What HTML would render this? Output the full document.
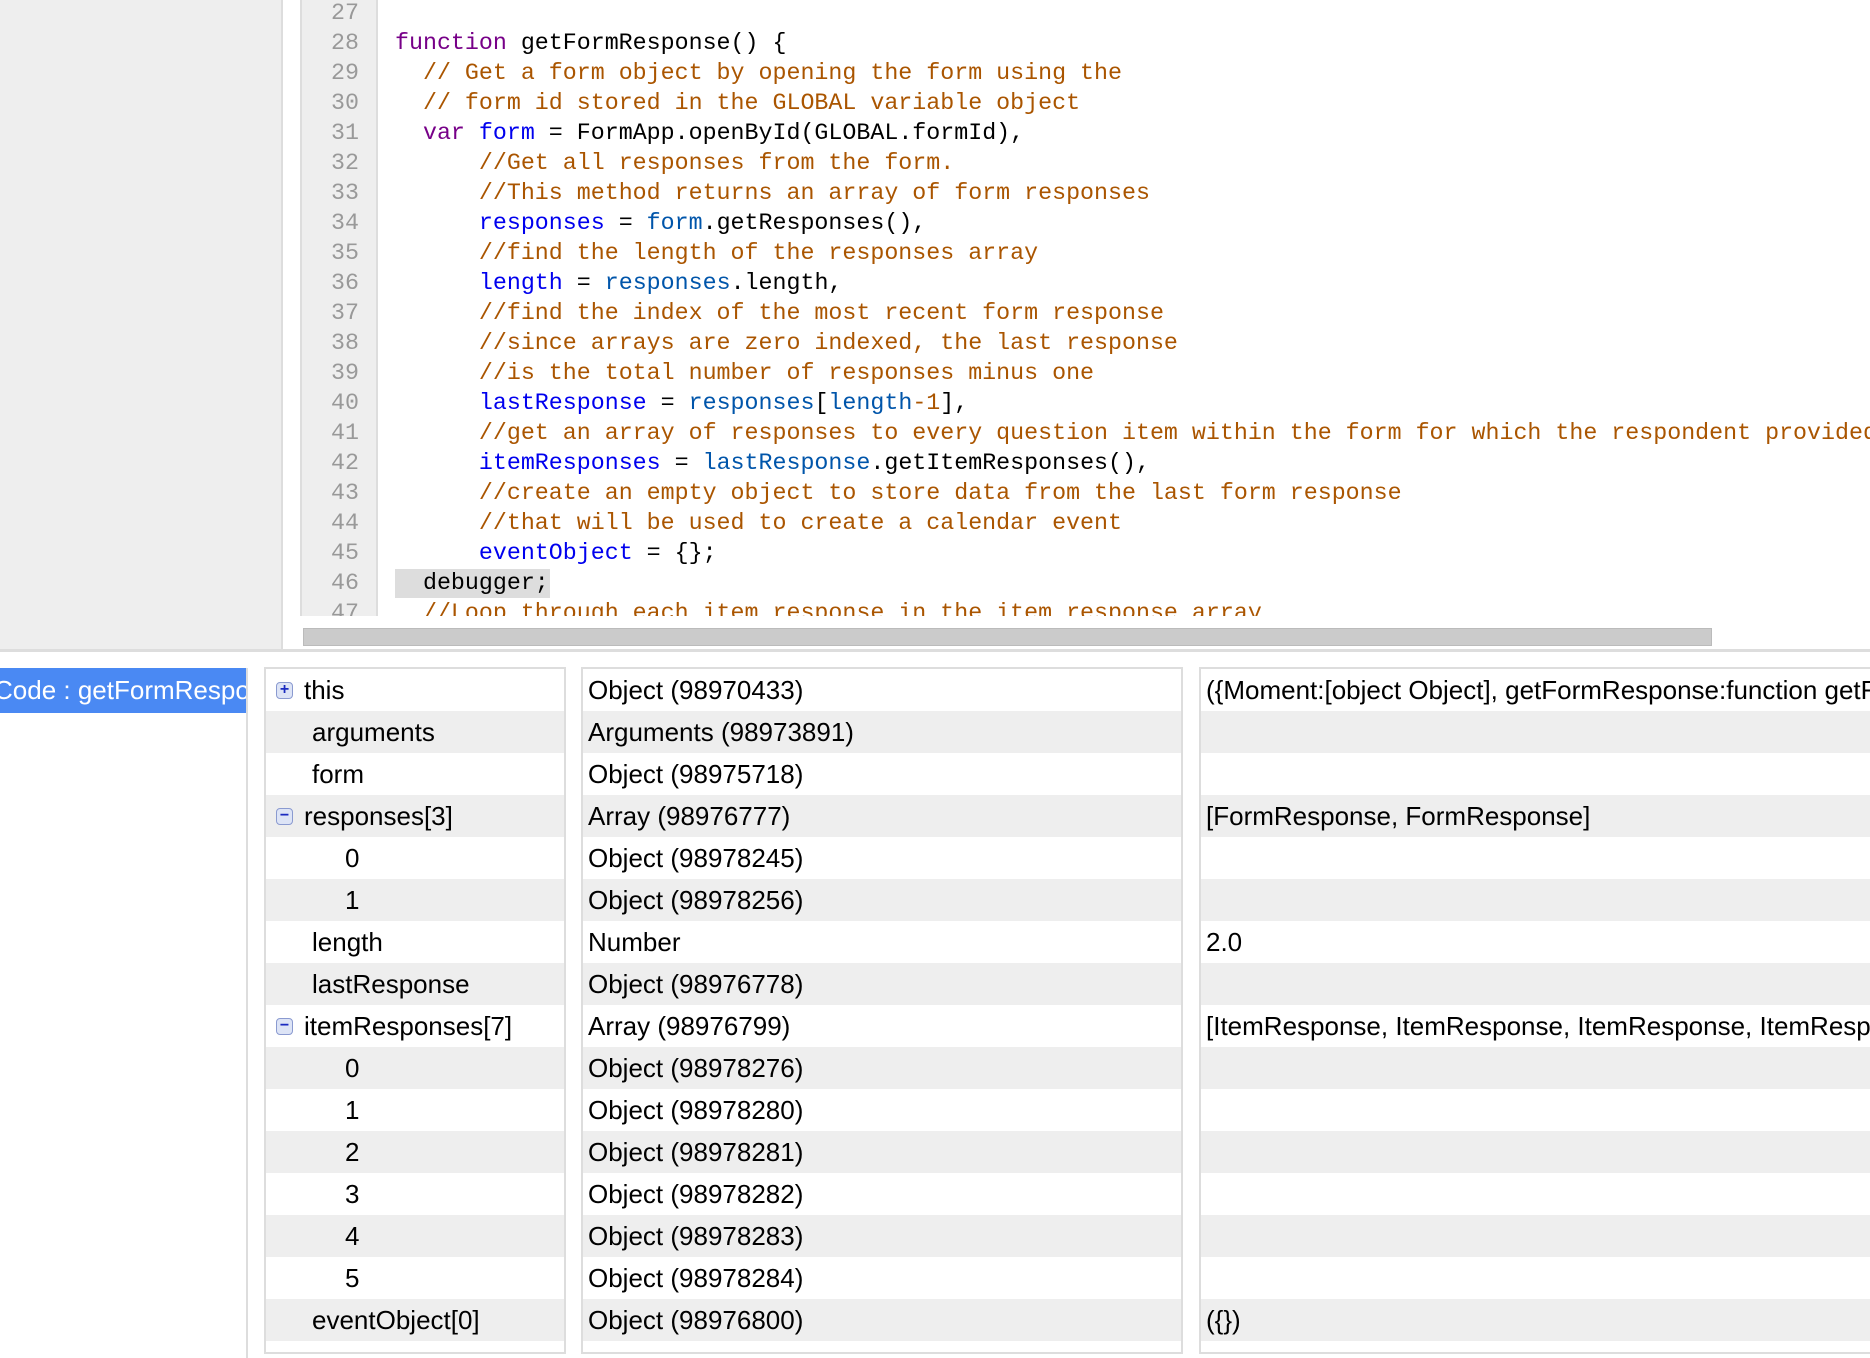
<!DOCTYPE html>
<html><head><meta charset="utf-8"><style>
*{margin:0;padding:0;box-sizing:border-box}
body{width:1870px;height:1358px;overflow:hidden;background:#fff;position:relative;font-family:"Liberation Sans",Arial,sans-serif}
.lp{position:absolute;left:0;top:0;width:283px;height:649px;background:#eee;border-right:2px solid #ddd}
.strip{position:absolute;left:285px;top:0;width:15px;height:649px;background:#fff}
.gut{position:absolute;left:300px;top:0;width:78px;height:616px;background:#eee;border-left:2px solid #ddd;border-right:2px solid #ddd}
.code{position:absolute;left:0;top:0;width:1870px;height:616px;overflow:hidden}
.ln{position:absolute;left:300px;width:59px;text-align:right;color:#999;font-family:"Liberation Mono",monospace;font-size:23.3px;line-height:30px}
.cl{position:absolute;left:395px;white-space:pre;font-family:"Liberation Mono",monospace;font-size:23.3px;line-height:30px;color:#000}
.k{color:#770088}.c{color:#aa5500}.d{color:#0000ee}.v{color:#0055aa}
.sb{position:absolute;left:303px;top:628px;width:1409px;height:18px;background:#cbcbcb;border:1px solid #bbb}
.hl{position:absolute;left:0;top:649px;width:1870px;height:3px;background:#ddd}
.tab{position:absolute;left:0;top:668px;width:246px;height:45px;background:#4a89f3;color:#fff;font-size:26px;line-height:45px;white-space:nowrap;overflow:hidden}
.vl{position:absolute;left:246px;top:668px;width:2px;height:690px;background:#ddd}
.t{position:absolute;top:667px;height:687px;border:2px solid #ddd;overflow:hidden}
.r{position:absolute;left:0;right:0;height:42px;font-size:26px;line-height:42px;white-space:nowrap;color:#000}
.g{background:#eee}
.ic{position:absolute;left:10px;top:13px;width:17px;height:17px;border:1px solid #8a9ad0;border-radius:4px;background:#dde4f6;color:#1a2ac0;font-size:16px;line-height:14px;text-align:center;font-weight:bold}
</style></head><body>
<div class="lp"></div><div class="strip"></div>
<div class="gut"></div>
<div class="code">
<div class="ln" style="top:-2px">27</div><div class="ln" style="top:28px">28</div><div class="ln" style="top:58px">29</div><div class="ln" style="top:88px">30</div><div class="ln" style="top:118px">31</div><div class="ln" style="top:148px">32</div><div class="ln" style="top:178px">33</div><div class="ln" style="top:208px">34</div><div class="ln" style="top:238px">35</div><div class="ln" style="top:268px">36</div><div class="ln" style="top:298px">37</div><div class="ln" style="top:328px">38</div><div class="ln" style="top:358px">39</div><div class="ln" style="top:388px">40</div><div class="ln" style="top:418px">41</div><div class="ln" style="top:448px">42</div><div class="ln" style="top:478px">43</div><div class="ln" style="top:508px">44</div><div class="ln" style="top:538px">45</div><div class="ln" style="top:568px">46</div><div class="ln" style="top:598px">47</div>
<div style="position:absolute;left:395px;top:569px;width:155px;height:29px;background:#ddd"></div>
<div class="cl" style="top:28px"><span class="k">function</span> getFormResponse() {</div>
<div class="cl" style="top:58px">  <span class="c">// Get a form object by opening the form using the</span></div>
<div class="cl" style="top:88px">  <span class="c">// form id stored in the GLOBAL variable object</span></div>
<div class="cl" style="top:118px">  <span class="k">var</span> <span class="d">form</span> = FormApp.openById(GLOBAL.formId),</div>
<div class="cl" style="top:148px">      <span class="c">//Get all responses from the form.</span></div>
<div class="cl" style="top:178px">      <span class="c">//This method returns an array of form responses</span></div>
<div class="cl" style="top:208px">      <span class="d">responses</span> = <span class="v">form</span>.getResponses(),</div>
<div class="cl" style="top:238px">      <span class="c">//find the length of the responses array</span></div>
<div class="cl" style="top:268px">      <span class="d">length</span> = <span class="v">responses</span>.length,</div>
<div class="cl" style="top:298px">      <span class="c">//find the index of the most recent form response</span></div>
<div class="cl" style="top:328px">      <span class="c">//since arrays are zero indexed, the last response</span></div>
<div class="cl" style="top:358px">      <span class="c">//is the total number of responses minus one</span></div>
<div class="cl" style="top:388px">      <span class="d">lastResponse</span> = <span class="v">responses</span>[<span class="v">length</span><span class="c">-1</span>],</div>
<div class="cl" style="top:418px">      <span class="c">//get an array of responses to every question item within the form for which the respondent provided</span></div>
<div class="cl" style="top:448px">      <span class="d">itemResponses</span> = <span class="v">lastResponse</span>.getItemResponses(),</div>
<div class="cl" style="top:478px">      <span class="c">//create an empty object to store data from the last form response</span></div>
<div class="cl" style="top:508px">      <span class="c">//that will be used to create a calendar event</span></div>
<div class="cl" style="top:538px">      <span class="d">eventObject</span> = {};</div>
<div class="cl" style="top:568px">  debugger;</div>
<div class="cl" style="top:598px">  <span class="c">//Loop through each item response in the item response array</span></div>
</div>
<div class="sb"></div>
<div class="hl"></div>
<div class="tab"><span style="margin-left:-6px">Code : getFormResponse</span></div>
<div class="vl"></div>

<div class="t" style="left:264px;width:302px">
<div class="r" style="top:0"><div class="ic">+</div><span style="margin-left:38px">this</span></div>
<div class="r g" style="top:42px"><span style="margin-left:46px">arguments</span></div>
<div class="r" style="top:84px"><span style="margin-left:46px">form</span></div>
<div class="r g" style="top:126px"><div class="ic">−</div><span style="margin-left:38px">responses[3]</span></div>
<div class="r" style="top:168px"><span style="margin-left:79px">0</span></div>
<div class="r g" style="top:210px"><span style="margin-left:79px">1</span></div>
<div class="r" style="top:252px"><span style="margin-left:46px">length</span></div>
<div class="r g" style="top:294px"><span style="margin-left:46px">lastResponse</span></div>
<div class="r" style="top:336px"><div class="ic">−</div><span style="margin-left:38px">itemResponses[7]</span></div>
<div class="r g" style="top:378px"><span style="margin-left:79px">0</span></div>
<div class="r" style="top:420px"><span style="margin-left:79px">1</span></div>
<div class="r g" style="top:462px"><span style="margin-left:79px">2</span></div>
<div class="r" style="top:504px"><span style="margin-left:79px">3</span></div>
<div class="r g" style="top:546px"><span style="margin-left:79px">4</span></div>
<div class="r" style="top:588px"><span style="margin-left:79px">5</span></div>
<div class="r g" style="top:630px"><span style="margin-left:46px">eventObject[0]</span></div>
<div class="r" style="top:672px"><span style="margin-left:46px">i</span></div>
</div>

<div class="t" style="left:581px;width:602px">
<div class="r" style="top:0"><span style="margin-left:5px">Object (98970433)</span></div>
<div class="r g" style="top:42px"><span style="margin-left:5px">Arguments (98973891)</span></div>
<div class="r" style="top:84px"><span style="margin-left:5px">Object (98975718)</span></div>
<div class="r g" style="top:126px"><span style="margin-left:5px">Array (98976777)</span></div>
<div class="r" style="top:168px"><span style="margin-left:5px">Object (98978245)</span></div>
<div class="r g" style="top:210px"><span style="margin-left:5px">Object (98978256)</span></div>
<div class="r" style="top:252px"><span style="margin-left:5px">Number</span></div>
<div class="r g" style="top:294px"><span style="margin-left:5px">Object (98976778)</span></div>
<div class="r" style="top:336px"><span style="margin-left:5px">Array (98976799)</span></div>
<div class="r g" style="top:378px"><span style="margin-left:5px">Object (98978276)</span></div>
<div class="r" style="top:420px"><span style="margin-left:5px">Object (98978280)</span></div>
<div class="r g" style="top:462px"><span style="margin-left:5px">Object (98978281)</span></div>
<div class="r" style="top:504px"><span style="margin-left:5px">Object (98978282)</span></div>
<div class="r g" style="top:546px"><span style="margin-left:5px">Object (98978283)</span></div>
<div class="r" style="top:588px"><span style="margin-left:5px">Object (98978284)</span></div>
<div class="r g" style="top:630px"><span style="margin-left:5px">Object (98976800)</span></div>
<div class="r" style="top:672px"><span style="margin-left:5px">undefined</span></div>
</div>

<div class="t" style="left:1199px;width:671px;border-right:none">
<div class="r" style="top:0"><span style="margin-left:5px">({Moment:[object Object], getFormResponse:function getFormResponse() {...}})</span></div>
<div class="r g" style="top:42px"></div>
<div class="r" style="top:84px"></div>
<div class="r g" style="top:126px"><span style="margin-left:5px">[FormResponse, FormResponse]</span></div>
<div class="r" style="top:168px"></div>
<div class="r g" style="top:210px"></div>
<div class="r" style="top:252px"><span style="margin-left:5px">2.0</span></div>
<div class="r g" style="top:294px"></div>
<div class="r" style="top:336px"><span style="margin-left:5px">[ItemResponse, ItemResponse, ItemResponse, ItemResponse, ItemResponse]</span></div>
<div class="r g" style="top:378px"></div>
<div class="r" style="top:420px"></div>
<div class="r g" style="top:462px"></div>
<div class="r" style="top:504px"></div>
<div class="r g" style="top:546px"></div>
<div class="r" style="top:588px"></div>
<div class="r g" style="top:630px"><span style="margin-left:5px">({})</span></div>
<div class="r" style="top:672px"><span style="margin-left:5px">undefined</span></div>
</div>
</body></html>
